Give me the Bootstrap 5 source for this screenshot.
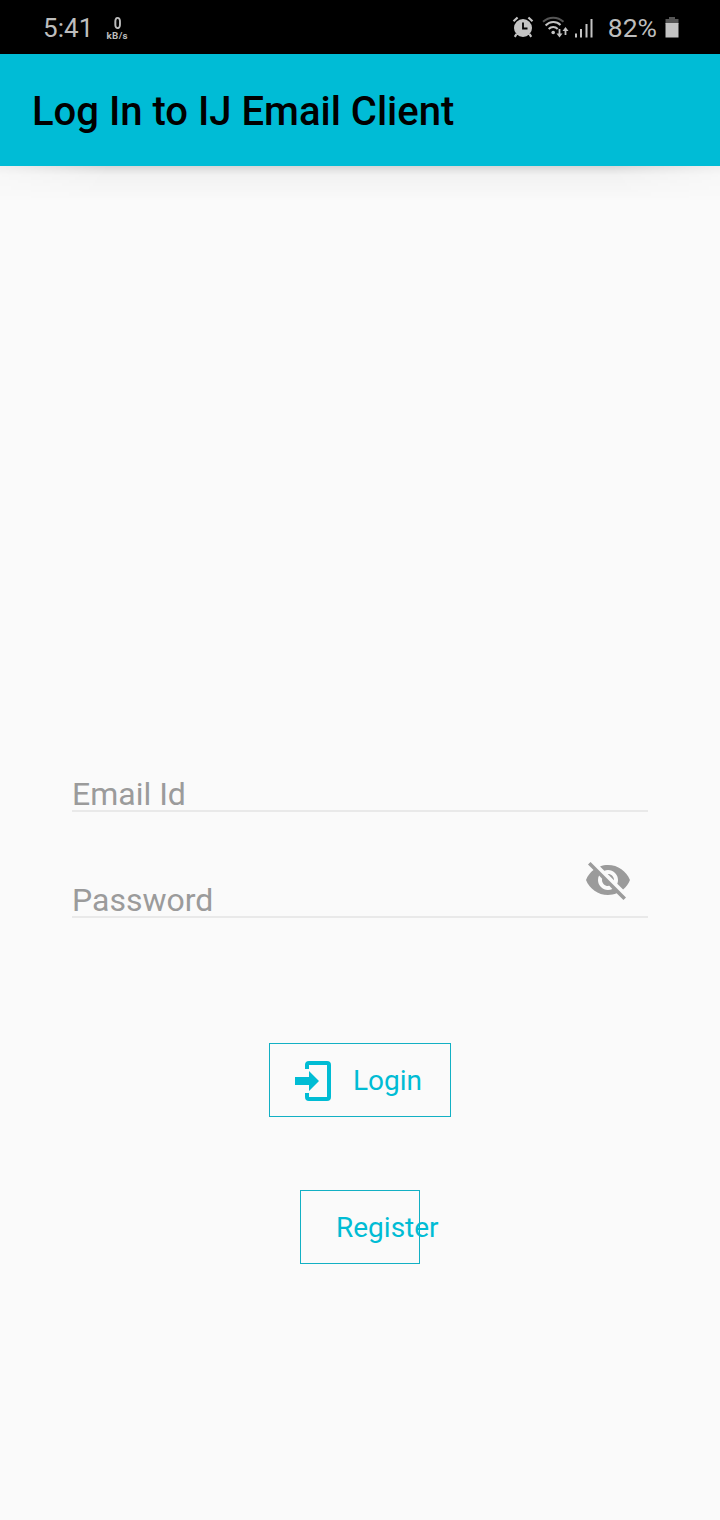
<!DOCTYPE html>
<html lang="en">
<head>
<meta charset="utf-8">
<meta name="viewport" content="width=device-width, initial-scale=1">
<title>IJ Email Client</title>
<link href="https://cdn.jsdelivr.net/npm/bootstrap@5.3.0/dist/css/bootstrap.min.css" rel="stylesheet">
<style>
  body { background: #fafafa; font-family: Roboto, sans-serif; line-height: 1; min-height: 1520px; }
  svg { display: block; flex: none; }
  .status-bar { height: 54px; background: #000; color: #bdbdbd; padding: 2px 41px 0 43px; font-size: 26.5px; }
  .clock { font-size: 26px; letter-spacing: .1px; }
  .net-speed { font-size: 9.8px; font-weight: 700; line-height: 10px; margin-left: 13px; padding-top: 2px; letter-spacing: .3px; }
  .net-value { font-size: 16px; line-height: 14px; transform: scaleX(.85); }
  .signal { margin-left: 6px; }
  .battery-level { margin-left: 15px; }
  .battery { margin-left: 8px; }
  .app-bar { height: 112px; background: #00bcd6; padding: 4px 32px 0; }
  .app-title { font-size: 40px; font-weight: 500; color: #000; line-height: 48px; }
  .bar-shadow { height: 34px; background: linear-gradient(rgba(0,0,0,.14), rgba(0,0,0,.09) 4px, rgba(0,0,0,.03) 9px, rgba(0,0,0,.016) 22px, transparent);
    -webkit-mask-image: linear-gradient(90deg, rgba(0,0,0,.3), #000 15%, #000 85%, rgba(0,0,0,.3)); }
  .login-form { padding: 560px 72px 0; }
  .field { height: 52px; border-bottom: 2px solid #e9e9e9; color: #9b9b9b; font-size: 32px; line-height: 32px; }
  .field + .field { height: 68px; margin-top: 38px; }
  .toggle-eye { margin-right: 16px; align-self: flex-start; margin-top: 6px; }
  .btn-line { --bs-btn-color: #00bcd4; --bs-btn-border-color: #12b0c4; --bs-btn-border-radius: 0; --bs-btn-font-size: 28px; --bs-btn-line-height: 1;
    height: 74px; }
  .btn-login { width: 182px; margin-top: 125px; padding: 2px 0 0 23px; }
  .login-text { margin-left: 12px; }
  .btn-register { width: 120px; margin-top: 73px; padding: 2px 0 0 35px; }
</style>
</head>
<body>
<header>
  <div class="status-bar d-flex align-items-center justify-content-between">
    <div class="d-flex align-items-center">
      <span class="clock">5:41</span>
      <div class="net-speed text-center"><div class="net-value">0</div>kB/s</div>
    </div>
    <div class="d-flex align-items-center">
      <svg width="22" height="24" viewBox="0 0 22 24" fill="none" stroke="#c4c4c4">
        <circle cx="11" cy="12" r="9" fill="#c4c4c4" stroke="none"/>
        <path d="M1.500 5.200 5.600 1.500M20.500 5.200 16.400 1.500M4.500 18 2.800 20.900M17.500 18l1.700 2.900" stroke-width="2.200"/>
        <path d="M11 6.500v6h4.500" stroke="#000" stroke-width="1.800"/>
      </svg>
      <svg class="ms-2" width="27" height="24" viewBox="0 0 27 24" fill="none" stroke="#c4c4c4" stroke-width="2">
        <path d="M1 5.700C7 .3 15.500.3 21.500 5.700" stroke="#555"/>
        <path d="M3.600 9.500C8 5 14.500 5 18.500 9M6.700 13c2.500-2.600 6.500-2.600 9 0"/>
        <circle cx="11.200" cy="16.500" r="1.800" fill="#c4c4c4" stroke="none"/>
        <path d="M17.500 13v6M23.500 19v-6" stroke-width="1.800"/>
        <path d="M14.500 17.500h6l-3 4zM20.500 15h6l-3-4z" fill="#c4c4c4" stroke="none"/>
      </svg>
      <svg class="signal" width="18" height="20" viewBox="0 0 18 20" fill="#c4c4c4">
        <path d="M0 15.500h2v4H0zM5 11h2v8.500H5zM10.500 6h2v13.500h-2zM15.500 1h2v18.500h-2z"/>
      </svg>
      <span class="battery-level">82%</span>
      <svg class="battery" width="14" height="24" viewBox="0 0 14 24">
        <path d="M4 1h6v2h3.500v5H.5V3H4z" fill="#555"/><path d="M.5 7h13v14.500H.5z" fill="#c4c4c4"/>
      </svg>
    </div>
  </div>
  <nav class="app-bar d-flex align-items-center">
    <h1 class="app-title m-0">Log In to IJ Email Client</h1>
  </nav>
  <div class="bar-shadow"></div>
</header>
<main>
  <form class="login-form d-flex flex-column">
    <div class="field d-flex align-items-end"><label>Email Id</label></div>
    <div class="field d-flex align-items-end justify-content-between">
      <label>Password</label>
      <svg class="toggle-eye" width="48" height="48" viewBox="0 0 24 24" fill="#9b9b9b">
        <path d="M12 7c2.760 0 5 2.240 5 5 0 .65-.13 1.260-.36 1.830l2.920 2.920c1.510-1.260 2.700-2.890 3.430-4.750-1.730-4.390-6-7.500-11-7.500-1.400 0-2.740.25-3.980.7l2.160 2.160C10.740 7.130 11.350 7 12 7zM2 4.270l2.280 2.280.46.46C3.080 8.300 1.780 10.020 1 12c1.730 4.390 6 7.500 11 7.500 1.550 0 3.030-.3 4.380-.84l.42.42L19.730 22 21 20.730 3.270 3 2 4.270zM7.530 9.800l1.550 1.550c-.05.21-.08.43-.08.65 0 1.660 1.340 3 3 3 .22 0 .44-.03.65-.08l1.550 1.550c-.67.33-1.410.53-2.200.53-2.760 0-5-2.240-5-5 0-.79.2-1.530.53-2.200zm4.310-.78l3.150 3.150.02-.16c0-1.660-1.340-3-3-3l-.17.01z"/>
      </svg>
    </div>
    <button type="button" class="btn btn-line btn-login d-flex align-items-center align-self-center">
      <svg width="48" height="48" viewBox="0 0 24 24" fill="#00bcd4">
        <path d="M8 17v-3H1v-4h7V7l5 5zM8 2h9a2 2 0 0 1 2 2v16a2 2 0 0 1-2 2H8a2 2 0 0 1-2-2v-2h2v2h9V4H8v2H6V4a2 2 0 0 1 2-2z"/>
      </svg>
      <span class="login-text">Login</span>
    </button>
    <button type="button" class="btn btn-line btn-register d-flex align-items-center align-self-center"><span>Register</span></button>
  </form>
</main>
<script src="https://cdn.jsdelivr.net/npm/bootstrap@5.3.0/dist/js/bootstrap.bundle.min.js"></script>
</body>
</html>
